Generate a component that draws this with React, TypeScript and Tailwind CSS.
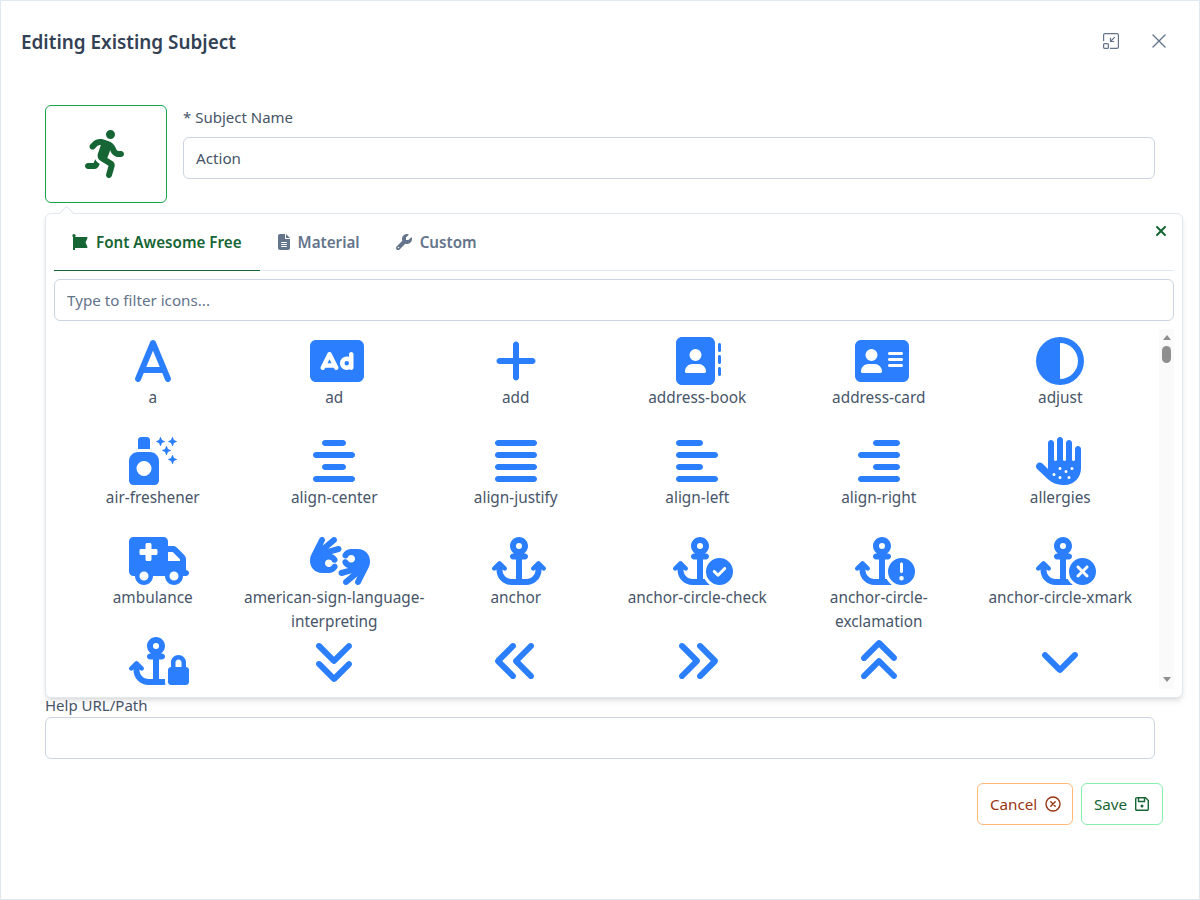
import React from "react";
import {
  FaA, FaRectangleAd, FaPlus, FaAddressBook, FaAddressCard, FaCircleHalfStroke,
  FaSprayCanSparkles, FaAlignCenter, FaAlignJustify, FaAlignLeft, FaAlignRight, FaHandDots,
  FaTruckMedical, FaHandsAslInterpreting, FaAnchor, FaAnchorCircleCheck, FaAnchorCircleExclamation, FaAnchorCircleXmark,
  FaAnchorLock, FaAnglesDown, FaAnglesLeft, FaAnglesRight, FaAnglesUp, FaAngleDown,
  FaPersonRunning, FaFontAwesome, FaFileLines, FaWrench, FaXmark,
} from "react-icons/fa6";

type I = React.ComponentType<{ className?: string }>;
const W48 = "h-[48px] w-[48px] max-w-none text-[#2b7fff]";
const W54 = "h-[48px] w-[54px] max-w-none text-[#2b7fff]";
const W60 = "h-[48px] w-[60px] max-w-none text-[#2b7fff]";
const items: [I, string, string][] = [
  [FaA, "a", W48], [FaRectangleAd, "ad", W54], [FaPlus, "add", W48], [FaAddressBook, "address-book", W48], [FaAddressCard, "address-card", W54], [FaCircleHalfStroke, "adjust", W48],
  [FaSprayCanSparkles, "air-freshener", W48], [FaAlignCenter, "align-center", W48], [FaAlignJustify, "align-justify", W48], [FaAlignLeft, "align-left", W48], [FaAlignRight, "align-right", W48], [FaHandDots, "allergies", W48],
  [FaTruckMedical, "ambulance", W60], [FaHandsAslInterpreting, "american-sign-language-interpreting", W60], [FaAnchor, "anchor", W54], [FaAnchorCircleCheck, "anchor-circle-check", W60], [FaAnchorCircleExclamation, "anchor-circle-exclamation", W60], [FaAnchorCircleXmark, "anchor-circle-xmark", W60],
  [FaAnchorLock, "", W60], [FaAnglesDown, "", W48], [FaAnglesLeft, "", W48], [FaAnglesRight, "", W48], [FaAnglesUp, "", W48], [FaAngleDown, "", W48],
];

export default function App() {
  return (
    <div className="w-[1200px] h-[900px] bg-white border border-[#e2e8f0] text-[#334155] font-['Noto_Sans',sans-serif] flex flex-col overflow-hidden">
      <header className="flex items-center justify-between pl-5 pr-[33px] pt-5 h-[82px] pb-5">
        <h1 className="text-[18.9px] font-semibold">Editing Existing Subject</h1>
        <div className="flex items-center gap-[33px] mb-[2px]">
          <svg width="16" height="16" viewBox="0 0 16 16" fill="none" stroke="#64748b" strokeWidth="1.2" className="block">
            <path d="M4 .6h10A1.400 1.400 0 0 1 15.400 2v12a1.400 1.400 0 0 1-1.400 1.400H7" />
            <path d="M.6 8V2A1.400 1.400 0 0 1 2 .6h2" />
            <rect x=".6" y="10.600" width="4.800" height="4.800" rx="1" />
            <path d="M11.800 4.200 7.500 8.500M7.500 4.800v3.700h3.700" />
          </svg>
          <svg width="14" height="14" viewBox="0 0 14 14" fill="none" stroke="#64748b" strokeWidth="1.4" strokeLinecap="round" className="block">
            <path d="M1 1l12 12M13 1 1 13" />
          </svg>
        </div>
      </header>

      <main className="relative flex-1 pl-11 pr-11">
        <div className="flex gap-4 pt-[22px]">
          <button className="w-[122px] h-[98px] shrink-0 border border-[#16a34a] rounded-md flex items-center justify-center bg-white">
            <FaPersonRunning className="h-[48px] w-[48px] text-[#166534]" />
          </button>
          <div className="flex-1">
            <label className="block text-[15px] leading-6 mb-2 text-[#475569]">* Subject Name</label>
            <input readOnly value="Action" className="w-full h-[42px] border border-[#cbd5e1] rounded-md px-3 text-[15.2px] text-[#475569] bg-white outline-none" />
          </div>
        </div>

        <div className="h-[492px] relative">
          <div className="absolute left-0 top-[10px] w-[1138px] h-[485px] bg-white border border-[#e2e8f0] rounded-md shadow-md px-2 z-10">
            <div className="absolute -top-[6px] left-[15px] w-[11px] h-[11px] rotate-45 bg-white border-l border-t border-[#e2e8f0]" />
            <FaXmark className="absolute right-[15px] top-[9px] h-[16px] w-[12px] text-[#166534]" />
            <div className="flex border-b border-[#e2e8f0] h-[57px]">
              <div className="flex items-center gap-2 px-[18px] text-[15.2px] font-semibold text-[#166534] border-b border-[#166534] h-[57px]">
                <FaFontAwesome className="h-[16px] w-[16px]" /> Font Awesome Free
              </div>
              <div className="flex items-center gap-2 px-[18px] text-[15.2px] font-semibold text-[#64748b]">
                <FaFileLines className="h-[16px] w-[12px]" /> Material
              </div>
              <div className="flex items-center gap-2 px-[18px] text-[15.2px] font-semibold text-[#64748b]">
                <FaWrench className="h-[16px] w-[16px]" /> Custom
              </div>
            </div>
            <input readOnly placeholder="Type to filter icons..." className="block mt-2 w-full h-[42px] border border-[#cbd5e1] rounded-md px-3 text-[15.2px] bg-white outline-none placeholder:text-[#64748b]" />
            <div className="mt-2 h-[360px] flex overflow-hidden">
              <div className="flex-1 min-w-0 overflow-hidden grid grid-cols-6 content-start pl-2 pr-2 pt-[8px]">
                {items.map(([Icon, name, size], i) => (
                  <div key={i} className="h-[100px] flex flex-col items-center text-center">
                    <div className="w-[48px] h-[48px] shrink-0">
                      <Icon className={size} />
                    </div>
                    {name && <span className="text-[15.36px] leading-6 mt-[1px] text-[#475569] break-words w-full">{name}</span>}
                  </div>
                ))}
              </div>
              <div className="w-[15px] shrink-0 bg-[#fafafa] flex flex-col items-center justify-between pt-[6px] pb-[7px]">
                <div className="flex flex-col items-center">
                  <div className="w-0 h-0 border-x-[4.5px] border-x-transparent border-b-[5px] border-b-[#8f8f8f]" />
                  <div className="w-[9px] h-[17px] mt-[6px] rounded-full bg-[#8f8f8f]" />
                </div>
                <div className="w-0 h-0 border-x-[4.5px] border-x-transparent border-t-[5px] border-t-[#8f8f8f]" />
              </div>
            </div>
          </div>
        </div>

        <label className="block text-[15px] leading-6 -mt-[2px] text-[#475569]">Help URL/Path</label>
        <div className="h-[42px] border border-[#cbd5e1] rounded-md bg-white" />
        <div className="flex justify-end gap-2 mt-6 -mr-2">
          <button className="h-[42px] w-[96px] flex items-center pl-3 gap-2 text-[15.2px] text-[#9a3412] border border-[#fdba74] rounded-md">
            Cancel
            <svg width="16" height="16" viewBox="0 0 16 16" fill="none" stroke="#9a3412" strokeWidth="1.400" strokeLinecap="round"><circle cx="8" cy="8" r="7" /><path d="M5.800 5.800l4.400 4.400M10.200 5.800l-4.400 4.400" /></svg>
          </button>
          <button className="h-[42px] w-[82px] flex items-center pl-3 gap-2 text-[15.2px] text-[#166534] border border-[#86efac] rounded-md">
            Save
            <svg width="14" height="14" viewBox="0 0 14 14" fill="none" stroke="#166534" strokeWidth="1.400"><path d="M1.500.7h9L13.300 3.500v8.800a1 1 0 0 1-1 1H1.700a1 1 0 0 1-1-1V1.700a1 1 0 0 1 1-1z" /><path d="M3.500.7v3.800h6V.7" /><circle cx="7" cy="9" r="1.500" fill="#166534" stroke="none" /></svg>
          </button>
        </div>
      </main>
    </div>
  );
}
